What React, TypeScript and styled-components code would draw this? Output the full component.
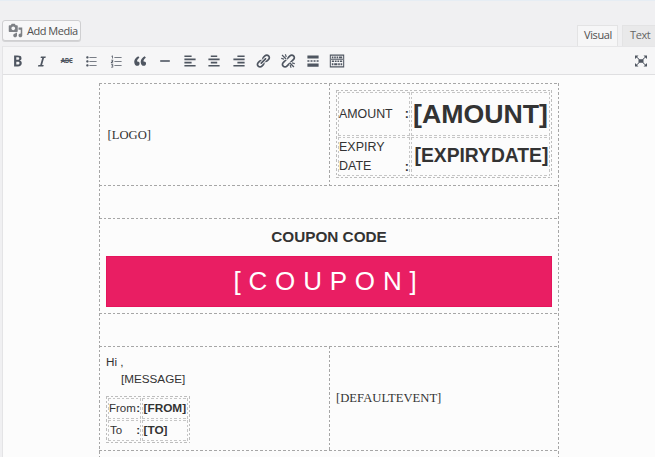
import React from 'react';
import styled, { createGlobalStyle } from 'styled-components';

const GlobalStyle = createGlobalStyle`
  * { box-sizing: border-box; }
  body { margin: 0; overflow: hidden; background: #f0f0f2; }
  svg { flex: none; }
`;

const sans = '"Liberation Sans", Arial, sans-serif';
const serif = '"Liberation Serif", "Times New Roman", serif';
const ui = '"Open Sans", "Noto Sans", sans-serif';

const horizontal = (c: string) => `repeating-linear-gradient(90deg, ${c} 0 2.6px, transparent 2.6px 4.6px)`;
const vertical = (c: string) => `repeating-linear-gradient(180deg, ${c} 0 2.6px, transparent 2.6px 4.6px)`;

const Page = styled.div`
  width: 655px;
  height: 457px;
  display: flex;
  flex-direction: column;
  overflow: hidden;
  border-top: 1px solid #e6edf4;
  background: #f0f0f2;
`;

const Header = styled.header`
  height: 45px;
  flex: none;
  display: flex;
  justify-content: space-between;
  padding-left: 2px;
`;

const MediaButton = styled.button`
  width: 79px;
  height: 21px;
  margin: 19px 0 0;
  padding: 0 0 0 5px;
  display: flex;
  align-items: center;
  gap: 4px;
  border: 1px solid #cfcfd1;
  border-radius: 3px;
  background: #f7f7f8;
  box-shadow: 0 1px 0 #d4d4d6;
  color: #505050;
  font: 11px/19px ${ui};
  letter-spacing: -0.48px;
  white-space: nowrap;

  svg { color: #7d8085; }
`;

const Tabs = styled.nav`
  display: flex;
  align-items: flex-end;
  gap: 4px;
`;

const Tab = styled.div<{ $active?: boolean }>`
  width: ${p => (p.$active ? 41 : 33)}px;
  height: ${p => (p.$active ? 22 : 21)}px;
  margin-bottom: ${p => (p.$active ? -1 : 0)}px;
  padding-left: ${p => (p.$active ? 6 : 7)}px;
  border: 1px solid #e3e3e4;
  border-bottom: 0;
  border-right-width: ${p => (p.$active ? 1 : 0)}px;
  background: ${p => (p.$active ? '#f6f6f7' : '#e9e9ea')};
  color: ${p => (p.$active ? '#505050' : '#666')};
  font: 11px/18px ${ui};
  letter-spacing: -0.4px;
`;

const Editor = styled.main`
  flex: 1;
  margin-left: 2px;
  display: flex;
  flex-direction: column;
  border-left: 1px solid #e4e4e6;
  background: #fcfcfc;
`;

const Toolbar = styled.div`
  height: 29px;
  flex: none;
  display: flex;
  align-items: center;
  padding-left: 2px;
  border-top: 1px solid #e6e6e8;
  border-bottom: 1px solid #dfdfe1;
  background: #f6f6f7;
  color: #4f5661;
`;

const Tool = styled.span<{ $last?: boolean }>`
  width: 24.62px;
  height: 20px;
  flex: none;
  display: flex;
  align-items: center;
  justify-content: center;
  margin-left: ${p => (p.$last ? 'auto' : '0')};
  margin-right: ${p => (p.$last ? '2px' : '0')};
`;

const Strike = styled.span`
  font: 700 6.5px/9px ${ui};
  letter-spacing: -0.4px;
  text-decoration: line-through;
`;

const Coupon = styled.section`
  width: 460px;
  height: 382px;
  margin: 8px 0 0 96px;
  flex: none;
  color: #333;
  background:
    ${vertical('#a6a6a6')} left top / 1px 100% no-repeat,
    ${vertical('#a6a6a6')} right top / 1px 100% no-repeat;
`;

const Band = styled.div<{ $h: number }>`
  height: ${p => p.$h}px;
  display: flex;
  background: ${horizontal('#a6a6a6')} left top / 100% 1px no-repeat;
`;

const Half = styled.div<{ $divided?: boolean }>`
  width: 230px;
  padding: 7px;
  background: ${p => (p.$divided ? vertical('#a6a6a6') : 'none')} left top / 1px 100% no-repeat;
`;

const Tag = styled.div<{ $left: number }>`
  padding: 36px 0 0 ${p => p.$left}px;
  font: 12.65px/18px ${serif};
`;

const Inner = styled.div<{ $cols: string; $rows: string; $w: number; $mt?: number }>`
  width: ${p => p.$w}px;
  margin-top: ${p => p.$mt ?? 0}px;
  display: grid;
  grid-template-columns: ${p => p.$cols};
  grid-template-rows: ${p => p.$rows};
  gap: 1px;
  padding: 2px;
  background:
    ${vertical('#bdbdbd')} left top / 1px 100% no-repeat,
    ${vertical('#bdbdbd')} right top / 1px 100% no-repeat,
    ${horizontal('#bdbdbd')} left top / 100% 1px no-repeat,
    ${horizontal('#bdbdbd')} left bottom / 100% 1px no-repeat;
`;

const Cell = styled.div<{ $size: number; $bold?: boolean; $pad?: number }>`
  display: flex;
  align-items: center;
  justify-content: space-between;
  padding: 0 1px 0 ${p => p.$pad ?? 1}px;
  font: ${p => (p.$bold ? 700 : 400)} ${p => p.$size}px/18.5px ${sans};
  white-space: nowrap;
  background:
    ${vertical('#c6c6c6')} left top / 1px 100% no-repeat,
    ${vertical('#c6c6c6')} right top / 1px 100% no-repeat,
    ${horizontal('#c6c6c6')} left top / 100% 1px no-repeat,
    ${horizontal('#c6c6c6')} left bottom / 100% 1px no-repeat;
`;

const Colon = styled.b<{ $low?: boolean }>`
  align-self: ${p => (p.$low ? 'flex-end' : 'center')};
`;

const CodeBlock = styled.div`
  width: 100%;
  padding: 9px 7px 0;
  text-align: center;
`;

const CodeTitle = styled.h2`
  margin: 0 0 10px;
  font: 700 15.3px/19px ${sans};
`;

const CodeBar = styled.div`
  height: 51px;
  background: #e91e63;
  color: #fff;
  font: 26px/51px ${sans};
  letter-spacing: 7.8px;
  box-shadow: inset 0 0 0 1px #e5145c;
`;

const Greeting = styled.p<{ $indent?: boolean }>`
  margin: 0;
  padding-left: ${p => (p.$indent ? 15 : 0)}px;
  font: 11.7px/17px ${sans};
`;

const Icon = ({ d, size = 16 }: { d: string; size?: number }) => (
  <svg width={size} height={size} viewBox="0 0 20 20" fill="currentColor"><path d={d} /></svg>
);

const media = 'M13 11V4c0-.55-.45-1-1-1h-1.67L9 1H5L3.67 3H2c-.55 0-1 .45-1 1v7c0 .55.45 1 1 1h10c.55 0 1-.45 1-1zM7 4.5c1.38 0 2.5 1.12 2.5 2.5S8.38 9.5 7 9.5 4.5 8.38 4.5 7 5.62 4.5 7 4.5zM14 6h5v10.5c0 1.38-1.12 2.5-2.5 2.5S14 17.88 14 16.5s1.12-2.5 2.5-2.5c.17 0 .34.02.5.05V9h-3V6zm-4 8.05V13h2v3.5c0 1.38-1.12 2.5-2.5 2.5S7 17.88 7 16.5 8.12 14 9.5 14c.17 0 .34.02.5.05z';
const bold = 'M6 4v13h4.54c1.37 0 2.46-.33 3.26-1 .8-.66 1.2-1.58 1.2-2.77 0-.84-.17-1.51-.51-2.01s-.9-.85-1.67-1.03v-.09c.57-.1 1.02-.4 1.36-.9s.51-1.13.51-1.91c0-1.14-.39-1.98-1.17-2.5C12.75 4.26 11.5 4 9.78 4H6zm2.57 5.15V6.26h1.36c.73 0 1.27.11 1.61.32.34.22.51.58.51 1.07 0 .54-.16.92-.47 1.15s-.82.35-1.51.35h-1.5zm0 2.19h1.6c1.44 0 2.16.53 2.16 1.61 0 .6-.17 1.05-.51 1.34s-.86.43-1.57.43H8.57v-3.38z';
const italic = 'M14.78 4.500h-6.100l-.5 1.900h2.100l-2.500 8.700h-2.300l-.6 1.900h6.700l.6-1.900h-2.100l2.500-8.700h1.700z';
const bullets = 'M5.5 7C4.67 7 4 6.33 4 5.5 4 4.68 4.67 4 5.5 4 6.32 4 7 4.68 7 5.5 7 6.33 6.32 7 5.5 7zM8 5h9v1H8V5zm-2.5 7c-.83 0-1.5-.67-1.5-1.5C4 9.68 4.67 9 5.5 9c.82 0 1.5.68 1.5 1.5 0 .83-.68 1.5-1.5 1.5zM8 10h9v1H8v-1zm-2.5 7c-.83 0-1.5-.67-1.5-1.5 0-.82.67-1.5 1.5-1.5.82 0 1.5.68 1.5 1.5 0 .83-.68 1.5-1.5 1.5zM8 15h9v1H8v-1z';
const numbers = 'M4 4l1.200-1H6v4H5V4.400H4zM8 5h9v1H8zM4 8.500h2.500v2L5 12h1.500v.700H3.600v-1l1.900-2v-.4H4zM8 10h9v1H8zM4 14h2.500v4H3.800v-.8h1.700v-.8h-1v-.7h1V15H4zM8 15h9v1H8z';
const quote = 'M9.49 13.22c0-.74-.2-1.38-.61-1.9-.62-.78-1.83-.88-2.53-.72-.29-1.65 1.11-3.75 2.92-4.65L7.88 4c-2.73 1.3-5.42 4.28-4.96 8.05C3.21 14.43 4.59 16 6.54 16c.85 0 1.56-.25 2.12-.75s.83-1.18.83-2.03zm8.05 0c0-.74-.2-1.38-.61-1.9-.63-.78-1.83-.88-2.53-.72-.29-1.65 1.11-3.75 2.92-4.65L15.93 4c-2.73 1.3-5.41 4.28-4.95 8.05.29 2.38 1.66 3.95 3.61 3.95.85 0 1.56-.25 2.12-.75s.83-1.18.83-2.03z';
const rule = 'M4 9h12v2H4z';
const left = 'M12 5V3H3v2h9zm5 4V7H3v2h14zm-5 4v-2H3v2h9zm5 4v-2H3v2h14z';
const center = 'M14 5V3H6v2h8zm3 4V7H3v2h14zm-3 4v-2H6v2h8zm3 4v-2H3v2h14z';
const right = 'M17 5V3H8v2h9zm0 4V7H3v2h14zm0 4v-2H8v2h9zm0 4v-2H3v2h14z';
const link = 'M17.74 2.76c1.68 1.69 1.68 4.41 0 6.1l-1.53 1.52c-1.12 1.12-2.7 1.47-4.14 1.09l2.62-2.61.76-.77.76-.76c.84-.84.84-2.2 0-3.04-.84-.85-2.2-.85-3.04 0l-.77.76-3.38 3.38c-.37-1.44-.02-3.02 1.1-4.14l1.52-1.53c1.69-1.68 4.42-1.68 6.1 0zM8.59 13.43l5.34-5.34c.42-.42.42-1.1 0-1.52-.44-.43-1.13-.39-1.53 0l-5.33 5.34c-.42.42-.42 1.1 0 1.52.44.43 1.13.39 1.52 0zm-.76 2.29l4.14-4.15c.38 1.44.03 3.02-1.09 4.14l-1.52 1.53c-1.69 1.68-4.41 1.68-6.1 0-1.68-1.68-1.68-4.42 0-6.1l1.53-1.52c1.12-1.12 2.7-1.47 4.14-1.1l-4.14 4.15c-.85.84-.85 2.2 0 3.05.84.84 2.2.84 3.04 0z';
const unlink = 'M17.74 2.76c1.68 1.69 1.68 4.41 0 6.1l-1.53 1.52c-1.12 1.12-2.7 1.47-4.14 1.09l4.14-4.14c.84-.84.84-2.2 0-3.04-.84-.85-2.2-.85-3.04 0L9.03 8.43c-.37-1.44-.02-3.02 1.1-4.14l1.52-1.53c1.69-1.68 4.42-1.68 6.1 0zM7.83 15.72l4.14-4.15c.38 1.44.03 3.02-1.09 4.14l-1.52 1.53c-1.69 1.68-4.41 1.68-6.1 0-1.68-1.68-1.68-4.42 0-6.1l1.53-1.52c1.12-1.12 2.7-1.47 4.14-1.1l-4.14 4.15c-.85.84-.85 2.2 0 3.05.84.84 2.2.84 3.04 0zM3 2l5.200 4.800-1.200 1.200L2 3zM6 1.500h1.500L8.500 5H7zM1.500 6L5 7v1.500l-3.500-1zM13 12l5 4.800-1.200 1.200-5-4.800zM12 15h1.500l1 3.500H13zM15 11.500l3.500 1V14L15 13z';
const more = 'M3 3.100h14v3.900H3zM3 13.200h14v3.900H3zM3 9.200h2.500v1.700H3zM6.900 9.200h2.500v1.700H6.900zM10.700 9.200h2.500v1.700h-2.500zM14.500 9.200H17v1.700h-2.500z';
const sink = 'M1 2h18v16H1zM2.300 3.300v13.400h15.400V3.300zM3.500 4.300h2v2.200h-2zM6.500 4.300h2v2.200h-2zM9.500 4.300h2v2.200h-2zM12.500 4.300h4v2.200h-4zM2 7.300h16v1.200H2zM3.500 9.300h3v2h-3zM7.500 9.300h2v2h-2zM10.500 9.300h2v2h-2zM13.500 9.300h3v2h-3zM3.500 12.800h2v2.500h-2zM6.500 12.800h4v2.500h-4zM11.500 12.800h2v2.500h-2zM14.500 12.800h2v2.500h-2z';

const ExpandIcon = () => (
  <svg width="14" height="12" viewBox="0 0 14 12" fill="currentColor">
    <path d="M1 .5h3.500L1 4zM13 .5H9.500L13 4zM1 11.500h3.500L1 8zM13 11.500H9.500L13 8zM4.500 4.300h5v3.400h-5z" />
    <path d="M2 1.500l3.500 3.200M12 1.500L8.500 4.700M2 10.500l3.500-3.200M12 10.500L8.500 7.300" stroke="currentColor" strokeWidth="1" />
  </svg>
);

export default function App() {
  return (
    <>
      <GlobalStyle />
      <Page>
        <Header>
          <MediaButton><Icon d={media} size={15} />Add Media</MediaButton>
          <Tabs><Tab $active>Visual</Tab><Tab>Text</Tab></Tabs>
        </Header>
        <Editor>
          <Toolbar>
            <Tool><Icon d={bold} size={17} /></Tool>
            <Tool><Icon d={italic} /></Tool>
            <Tool><Strike>ABC</Strike></Tool>
            {[bullets, numbers, quote, rule, left, center, right, link, unlink, more].map((d, i) => (
              <Tool key={i}><Icon d={d} /></Tool>
            ))}
            <Tool>
              <svg width="16" height="16" viewBox="0 0 20 20" fill="currentColor" fillRule="evenodd"><path d={sink} /></svg>
            </Tool>
            <Tool $last><ExpandIcon /></Tool>
          </Toolbar>
          <Coupon>
            <Band $h={102}>
              <Half><Tag $left={1.5}>[LOGO]</Tag></Half>
              <Half $divided>
                <Inner $w={216} $cols="72px 139px" $rows="44px 39px">
                  <Cell $size={12.4}>AMOUNT<Colon>:</Colon></Cell>
                  <Cell $size={26.7} $bold $pad={2}>[AMOUNT]</Cell>
                  <Cell $size={12.5}><span>EXPIRY<br />DATE</span><Colon $low>:</Colon></Cell>
                  <Cell $size={19.3} $bold $pad={3.5}>[EXPIRYDATE]</Cell>
                </Inner>
              </Half>
            </Band>
            <Band $h={33} />
            <Band $h={95}>
              <CodeBlock>
                <CodeTitle>COUPON CODE</CodeTitle>
                <CodeBar>[COUPON]</CodeBar>
              </CodeBlock>
            </Band>
            <Band $h={33} />
            <Band $h={104}>
              <Half>
                <Greeting>Hi ,</Greeting>
                <Greeting $indent>[MESSAGE]</Greeting>
                <Inner $w={84} $mt={9} $cols="33px 46px" $rows="21px 21px">
                  <Cell $size={11.5}>From<Colon>:</Colon></Cell>
                  <Cell $size={11.8} $bold $pad={1.5}>[FROM]</Cell>
                  <Cell $size={11.5} $pad={2}>To<Colon>:</Colon></Cell>
                  <Cell $size={11.8} $bold $pad={1.5}>[TO]</Cell>
                </Inner>
              </Half>
              <Half $divided><Tag $left={0}>[DEFAULTEVENT]</Tag></Half>
            </Band>
            <Band $h={15} />
          </Coupon>
        </Editor>
      </Page>
    </>
  );
}
